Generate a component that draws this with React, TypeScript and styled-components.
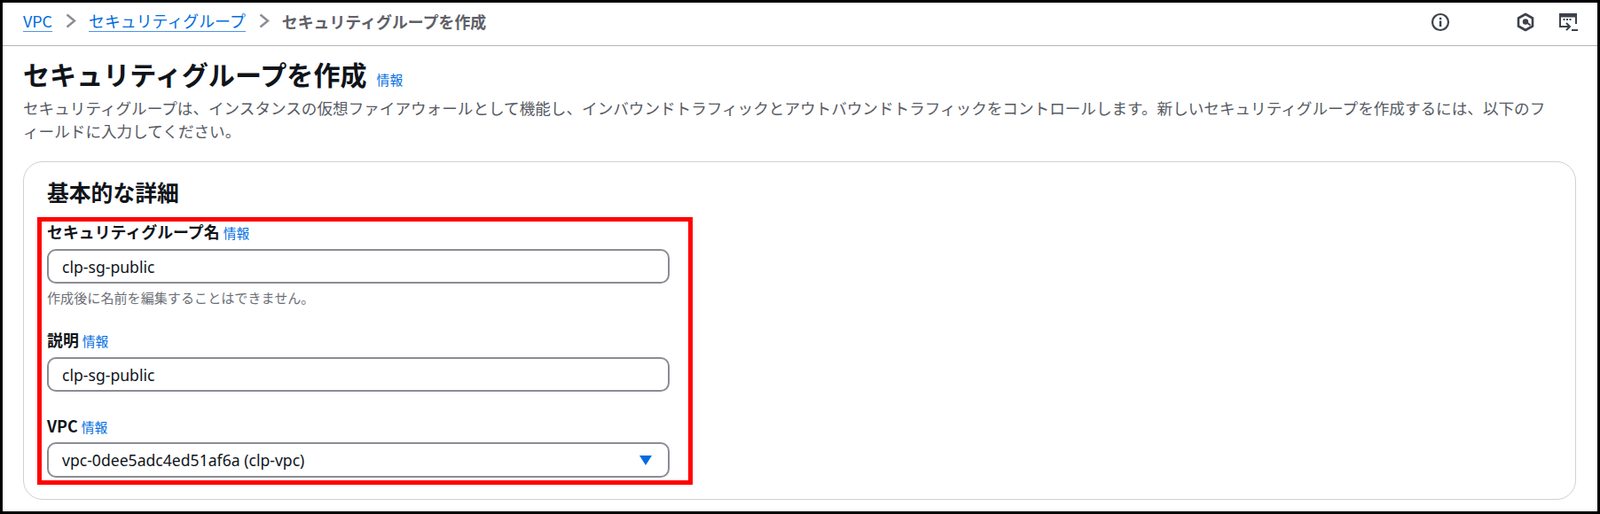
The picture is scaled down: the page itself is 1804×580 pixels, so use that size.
import React from "react";
import styled, { createGlobalStyle } from "styled-components";

const Global = createGlobalStyle`
  html, body { margin: 0; padding: 0; background: #fff; }
  body { font-family: "Noto Sans CJK JP", "Noto Sans", sans-serif; color: #0f141a; }
  * { box-sizing: border-box; }
`;

const Frame = styled.div`
  width: 1804px;
  height: 580px;
  border: 3px solid #000;
  overflow: hidden;
  background: #fff;
`;

const TopBar = styled.header`
  height: 49px;
  padding: 0 23px 5px;
  display: flex;
  align-items: center;
  border-bottom: 1px solid #b4b4bb;
`;

const Crumbs = styled.nav`
  display: flex;
  align-items: center;
  font-size: 17.9px;
  margin-bottom: 2px;
`;

const CrumbLink = styled.a`
  color: #006ce0;
  line-height: 23px;
  border-bottom: 1.5px solid #4d95e8;
  margin-top: 1px;
`;

const CrumbCurrent = styled.span`
  color: #5f6068;
  font-weight: 700;
`;

const Chevron = styled.svg`
  width: 12px;
  height: 17px;
  margin: 0 14px 0 15px;
  flex: none;
`;

const TopIcons = styled.div`
  margin-left: auto;
  display: flex;
  align-items: center;
  margin-right: -2px;
`;

const TopIcon = styled.svg<{ $gap?: number }>`
  display: block;
  margin-left: ${(p) => p.$gap ?? 0}px;
  flex: none;
`;

const Main = styled.main`
  padding: 13px 24px 0 23px;
`;

const TitleRow = styled.div`
  display: flex;
  align-items: baseline;
  gap: 11px;
`;

const Title = styled.h1`
  margin: 0;
  font-size: 30.1px;
  line-height: 36px;
  font-weight: 700;
`;

const Info = styled.a`
  color: #006ce0;
  font-size: 14.8px;
  font-weight: 400;
`;

const Description = styled.p`
  margin: 8px 0 21px;
  font-size: 17.6px;
  line-height: 26px;
  color: #565a63;
  white-space: nowrap;
`;

const Card = styled.section`
  height: 382px;
  border: 1px solid #d0d0d6;
  border-radius: 22px;
  padding: 16px 26px 0;
`;

const CardTitle = styled.h2`
  margin: 0 0 12px;
  font-size: 24.8px;
  line-height: 34px;
  font-weight: 700;
`;

const Highlight = styled.div`
  width: 739px;
  margin-left: -11px;
  border: 5px solid #ff0000;
  padding: 0 21px 3px 6px;
`;

const Field = styled.div<{ $top?: number }>`
  margin-top: ${(p) => p.$top ?? 0}px;
`;

const Label = styled.label<{ $gap?: number }>`
  display: flex;
  align-items: baseline;
  gap: 4px;
  height: 24px;
  line-height: 22px;
  font-size: 17.9px;
  font-weight: 700;
  margin-bottom: ${(p) => p.$gap ?? 7}px;
`;

const Input = styled.input`
  display: block;
  width: 702px;
  height: 39px;
  padding: 0 15px;
  border: 2px solid #8c8c94;
  border-radius: 10px;
  font: 400 17.6px "Noto Sans", "Noto Sans CJK JP", sans-serif;
  color: #0f141a;
  background: #fff;
  outline: none;
`;

const Select = styled.div`
  width: 702px;
  height: 40px;
  padding: 0 18px 0 15px;
  border: 2px solid #8c8c94;
  border-radius: 10px;
  display: flex;
  align-items: center;
  justify-content: space-between;
  font: 400 17.6px "Noto Sans", "Noto Sans CJK JP", sans-serif;
`;

const Hint = styled.div`
  margin-top: 5px;
  height: 20px;
  line-height: 20px;
  font-size: 15.1px;
  color: #6b6e76;
`;

function ChevronIcon() {
  return (
    <Chevron viewBox="0 0 12 17">
      <polyline points="1.5,1.5 10,8.5 1.5,15.5" fill="none" stroke="#8c8c94" strokeWidth="2.4" />
    </Chevron>
  );
}

export default function App() {
  return (
    <>
      <Global />
      <Frame>
        <TopBar>
          <Crumbs>
            <CrumbLink>VPC</CrumbLink>
            <ChevronIcon />
            <CrumbLink>セキュリティグループ</CrumbLink>
            <ChevronIcon />
            <CrumbCurrent>セキュリティグループを作成</CrumbCurrent>
          </Crumbs>
          <TopIcons>
            <TopIcon width="22" height="22" viewBox="0 0 22 22">
              <circle cx="11" cy="11" r="9" fill="none" stroke="#3c424c" strokeWidth="2.2" />
              <rect x="9.9" y="9.5" width="2.4" height="6.5" fill="#3c424c" />
              <rect x="9.9" y="5.8" width="2.4" height="2.4" fill="#3c424c" />
            </TopIcon>
            <TopIcon $gap={75} width="20" height="22" viewBox="0 0 20 22">
              <path d="M10 2 L18 6.5 V15.5 L10 20 L2 15.5 V6.5 Z" fill="none" stroke="#3c424c" strokeWidth="2.6" strokeLinejoin="round" />
              <circle cx="10" cy="10.5" r="3.2" fill="#3c424c" />
              <line x1="11" y1="11" x2="15.5" y2="14.5" stroke="#3c424c" strokeWidth="2" />
            </TopIcon>
            <TopIcon $gap={26} width="24" height="24" viewBox="0 0 24 24">
              <path d="M8 17 H3 V3 H21 V14" fill="none" stroke="#3c424c" strokeWidth="2" />
              <rect x="3" y="3" width="18" height="3.5" fill="#3c424c" />
              <rect x="6.5" y="8" width="2" height="2" fill="#3c424c" />
              <rect x="10" y="8" width="2" height="2" fill="#3c424c" />
              <rect x="13.5" y="8" width="2" height="2" fill="#3c424c" />
              <path d="M10 13 L14 17 L10 21 M5 17 H14" fill="none" stroke="#3c424c" strokeWidth="2" />
              <rect x="16" y="20" width="7" height="2" fill="#3c424c" />
            </TopIcon>
          </TopIcons>
        </TopBar>
        <Main>
          <TitleRow>
            <Title>セキュリティグループを作成</Title>
            <Info>情報</Info>
          </TitleRow>
          <Description>
            セキュリティグループは、インスタンスの仮想ファイアウォールとして機能し、インバウンドトラフィックとアウトバウンドトラフィックをコントロールします。新しいセキュリティグループを作成するには、以下のフ
            <br />
            ィールドに入力してください。
          </Description>
          <Card>
            <CardTitle>基本的な詳細</CardTitle>
            <Highlight>
              <Field>
                <Label>
                  セキュリティグループ名 <Info>情報</Info>
                </Label>
                <Input readOnly value="clp-sg-public" />
                <Hint>作成後に名前を編集することはできません。</Hint>
              </Field>
              <Field $top={27}>
                <Label>
                  説明 <Info>情報</Info>
                </Label>
                <Input readOnly value="clp-sg-public" />
              </Field>
              <Field $top={27}>
                <Label $gap={6}>
                  VPC <Info>情報</Info>
                </Label>
                <Select>
                  <span>vpc-0dee5adc4ed51af6a (clp-vpc)</span>
                  <svg width="14" height="11" viewBox="0 0 14 11">
                    <path d="M0 0 H14 L7 11 Z" fill="#006ce0" />
                  </svg>
                </Select>
              </Field>
            </Highlight>
          </Card>
        </Main>
      </Frame>
    </>
  );
}
